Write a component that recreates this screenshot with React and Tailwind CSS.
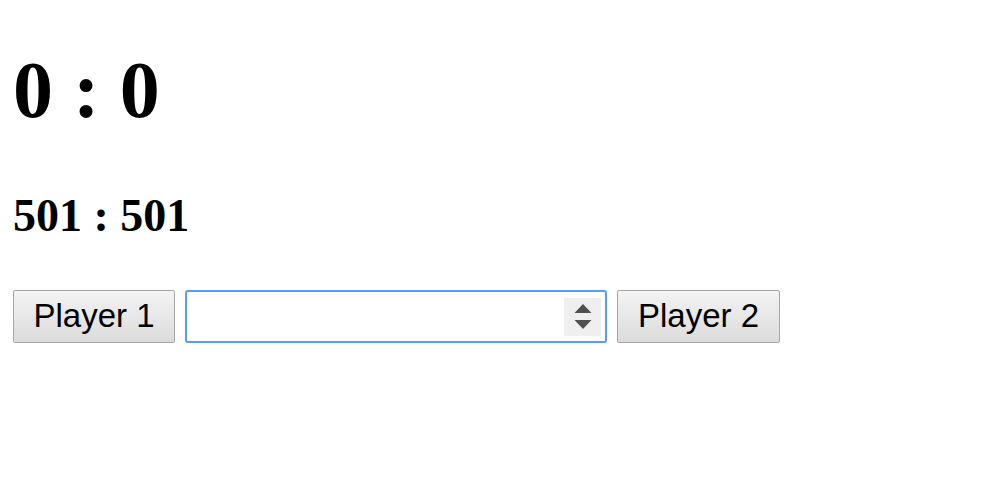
export default function App() {
  const btn =
    "h-[53px] border border-[#a6a6a6] rounded-[2px] bg-gradient-to-b from-[#f3f3f3] to-[#dcdcdc] text-[33px] leading-none text-black flex items-center justify-center pb-[2px] whitespace-nowrap";
  return (
    <div className="min-h-[485px] bg-white px-[13px] flex flex-col items-start" style={{ fontFamily: '"Liberation Serif", serif' }}>
      <h1 className="mt-[50px] text-[80px] leading-none font-bold text-black whitespace-pre" style={{ fontFamily: '"Liberation Serif", serif' }}>
        0 : 0
      </h1>
      <h2 className="mt-[63px] text-[46px] leading-none font-bold text-black whitespace-pre" style={{ fontFamily: '"Liberation Serif", serif' }}>
        501 : 501
      </h2>
      <div className="mt-[51px] flex items-start gap-[10px]" style={{ fontFamily: '"Liberation Sans", Arial, sans-serif' }}>
        <button className={`${btn} w-[162px]`}>Player 1</button>
        <div className="w-[422px] h-[53px] border-2 border-[#5b9bf7] rounded-[3px] bg-white flex items-center justify-end pr-[4px]">
          <div className="w-[37px] h-[38px] bg-[#efefef] flex items-center justify-center">
            <svg width="18" height="26" viewBox="0 0 18 26">
              <polygon points="9,0 17.5,9 0.5,9" fill="#505050" />
              <polygon points="0.5,16 17.5,16 9,25" fill="#505050" />
            </svg>
          </div>
        </div>
        <button className={`${btn} w-[163px]`}>Player 2</button>
      </div>
    </div>
  );
}
